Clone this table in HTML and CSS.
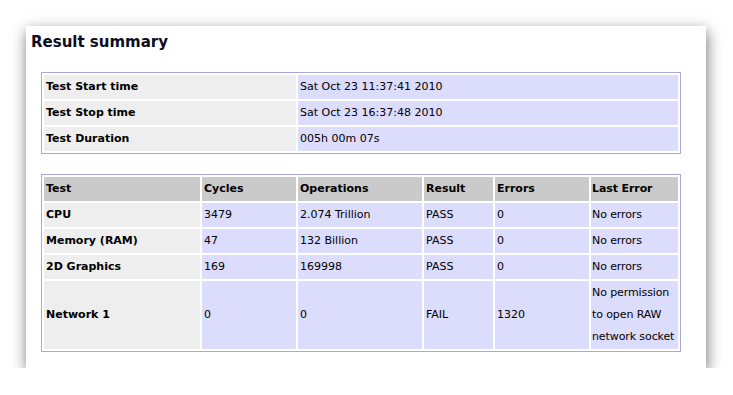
FILE: index.html
```html
<!DOCTYPE html>
<html>
<head>
<meta charset="utf-8">
<link rel="stylesheet" href="styles.css">
</head>
<body>
<div class="card">
  <h1 class="title">Result summary</h1>
  <table class="grid times">
    <colgroup><col class="c-label"><col class="c-value"></colgroup>
    <tr><td class="label">Test Start time</td><td class="val">Sat Oct 23 11:37:41 2010</td></tr>
    <tr><td class="label">Test Stop time</td><td class="val">Sat Oct 23 16:37:48 2010</td></tr>
    <tr><td class="label">Test Duration</td><td class="val">005h 00m 07s</td></tr>
  </table>
  <table class="grid results">
    <colgroup>
      <col class="c1"><col class="c2"><col class="c3"><col class="c4"><col class="c5"><col class="c6">
    </colgroup>
    <tr class="head"><th>Test</th><th>Cycles</th><th>Operations</th><th>Result</th><th>Errors</th><th class="last">Last Error</th></tr>
    <tr><td class="label">CPU</td><td class="val">3479</td><td class="val">2.074 Trillion</td><td class="val">PASS</td><td class="val">0</td><td class="val last">No errors</td></tr>
    <tr><td class="label">Memory (RAM)</td><td class="val">47</td><td class="val">132 Billion</td><td class="val">PASS</td><td class="val">0</td><td class="val last">No errors</td></tr>
    <tr><td class="label">2D Graphics</td><td class="val">169</td><td class="val">169998</td><td class="val">PASS</td><td class="val">0</td><td class="val last">No errors</td></tr>
    <tr><td class="label">Network 1</td><td class="val">0</td><td class="val">0</td><td class="val">FAIL</td><td class="val">1320</td><td class="val last">No permission to open RAW network socket</td></tr>
  </table>
</div>
</body>
</html>
```
FILE: styles.css
```css
html, body {
  margin: 0;
  padding: 0;
  background: #ffffff;
}
body {
  padding: 26px 0 0 26px;
  font-family: "DejaVu Sans", Verdana, sans-serif;
  color: #000000;
}
.card {
  width: 680px;
  height: 342px;
  box-sizing: border-box;
  background: #ffffff;
  box-shadow: 1px 5px 14px rgba(0, 0, 0, 0.55);
  padding: 5px 0 0 5px;
}
.title {
  margin: 0;
  font-size: 15px;
  line-height: 22px;
  font-weight: bold;
  color: #0c0c24;
  height: 22px;
}
.grid {
  table-layout: fixed;
  border-collapse: separate;
  border-spacing: 2px;
  border: 1px solid #a9a9dc;
  width: 640px;
  margin-left: 10px;
  font-size: 11px;
  line-height: 22px;
}
.grid td, .grid th {
  padding: 1px 2px;
  vertical-align: middle;
  text-align: left;
}
.grid .last {
  padding-left: 1px;
  padding-right: 0;
  letter-spacing: -0.1px;
}
.times {
  margin-top: 19px;
}
.results {
  margin-top: 20px;
}
.c-label { width: 252px; }
.c-value { width: 380px; }
.c1 { width: 156px; }
.c2 { width: 94px; }
.c3 { width: 124px; }
.c4 { width: 69px; }
.c5 { width: 94px; }
.c6 { width: 87px; }
.label {
  background: #eeeeee;
  font-weight: bold;
}
.val {
  background: #dcdcfc;
}
.head th {
  background: #cacaca;
  font-weight: bold;
}
```
